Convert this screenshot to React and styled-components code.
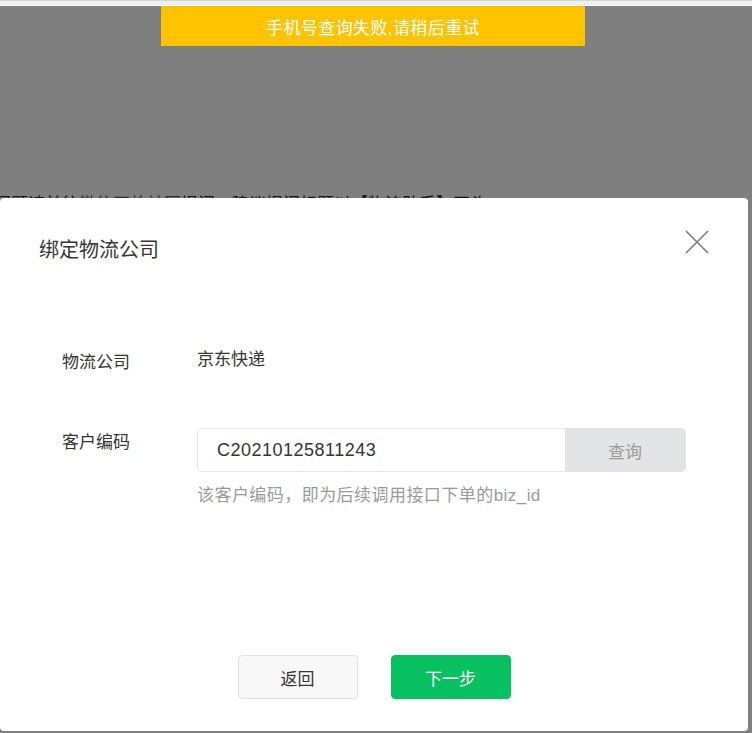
import React from 'react'
import styled, { createGlobalStyle } from 'styled-components'

const GlobalStyle = createGlobalStyle`
  html, body {
    margin: 0;
    padding: 0;
    background: #ffffff;
    font-family: "Liberation Sans", "Noto Sans CJK SC", sans-serif;
    color: #353535;
    overflow: hidden;
  }
`

const Page = styled.div`
  width: 752px;
  height: 733px;
  position: relative;
  overflow: hidden;
`

const TopStrip = styled.div`
  height: 5px;
  border-top: 1px solid #d6d6d6;
  background: #f0f0f0;
  box-sizing: border-box;
`

const PageBody = styled.div`
  padding-top: 188px;
  margin-left: -6px;
  font-size: 17px;
  line-height: 24px;
  color: #2a2a2a;
  white-space: nowrap;
`

const Link = styled.span`
  color: #3f5a8f;
`

const Mask = styled.div`
  position: fixed;
  top: 6px;
  left: 0;
  right: 0;
  bottom: 0;
  background: rgba(0, 0, 0, 0.5);
  display: flex;
  flex-direction: column;
  align-items: flex-start;
`

const Toast = styled.div`
  margin-left: 161px;
  width: 424px;
  height: 40px;
  background: #ffc300;
  color: #ffffff;
  font-size: 17px;
  letter-spacing: 0.4px;
  display: flex;
  align-items: center;
  justify-content: center;
`

const Dialog = styled.div`
  position: relative;
  margin-top: 152px;
  width: 748px;
  height: 533px;
  background: #ffffff;
  border-radius: 4px;
  box-sizing: border-box;
  display: flex;
  flex-direction: column;
  padding: 38px 62px 32px 62px;
`

const Title = styled.h2`
  margin: 0 0 0 -23px;
  font-size: 20px;
  font-weight: normal;
  line-height: 28px;
  color: #353535;
`

const Close = styled.button`
  position: absolute;
  top: 31px;
  right: 38px;
  width: 26px;
  height: 26px;
  padding: 0;
  border: 0;
  background: none;
  cursor: pointer;
`

const Form = styled.div`
  margin-top: 84px;
  display: flex;
  flex-direction: column;
  gap: 53px;
`

const Row = styled.div`
  display: flex;
  align-items: flex-start;
`

const Label = styled.div`
  width: 135px;
  flex-shrink: 0;
  font-size: 17px;
  line-height: 24px;
  padding-top: ${p => p.offset || 0}px;
  color: #353535;
`

const Value = styled.div`
  font-size: 17px;
  line-height: 24px;
  color: #353535;
`

const Field = styled.div`
  flex: 1;
  display: flex;
  flex-direction: column;
`

const InputGroup = styled.div`
  display: flex;
  height: 44px;
  border: 1px solid #e5e5e5;
  border-radius: 4px;
  box-sizing: border-box;
  overflow: hidden;
`

const Input = styled.input`
  flex: 1;
  border: 0;
  outline: none;
  padding: 0 19px;
  font-family: "Liberation Sans", "Noto Sans CJK SC", sans-serif;
  font-size: 18px;
  letter-spacing: 0.5px;
  color: #353535;
  background: #ffffff;
`

const QueryButton = styled.button`
  width: 120px;
  border: 0;
  background: #e3e4e6;
  color: #9a9a9a;
  font-family: inherit;
  font-size: 17px;
`

const Hint = styled.div`
  margin-top: 12px;
  font-size: 17px;
  line-height: 24px;
  letter-spacing: 0.45px;
  color: #9a9a9a;
`

const Footer = styled.div`
  margin-top: auto;
  display: flex;
  justify-content: center;
  gap: 33px;
`

const Button = styled.button`
  width: 120px;
  height: 44px;
  border-radius: 4px;
  font-family: inherit;
  font-size: 17px;
  cursor: pointer;
  border: 1px solid ${p => (p.primary ? '#07c160' : '#e2e2e2')};
  background: ${p => (p.primary ? '#07c160' : '#f8f8f8')};
  color: ${p => (p.primary ? '#ffffff' : '#353535')};
`

const App = () => {
  return (
    <Page>
      <GlobalStyle />
      <TopStrip />
      <PageBody>
        问题请前往<Link>微信开放社区</Link>提问，建议提问标题以【物流助手】开头
      </PageBody>
      <Mask>
        <Toast>手机号查询失败,请稍后重试</Toast>
        <Dialog>
          <Title>绑定物流公司</Title>
          <Close aria-label="关闭">
            <svg width="26" height="26" viewBox="0 0 26 26">
              <path d="M2 2 L24 24 M24 2 L2 24" stroke="#7b7b7b" strokeWidth="1.6" fill="none" />
            </svg>
          </Close>
          <Form>
            <Row>
              <Label offset={3}>物流公司</Label>
              <Value>京东快递</Value>
            </Row>
            <Row>
              <Label offset={3}>客户编码</Label>
              <Field>
                <InputGroup>
                  <Input defaultValue="C20210125811243" />
                  <QueryButton>查询</QueryButton>
                </InputGroup>
                <Hint>该客户编码，即为后续调用接口下单的biz_id</Hint>
              </Field>
            </Row>
          </Form>
          <Footer>
            <Button>返回</Button>
            <Button primary>下一步</Button>
          </Footer>
        </Dialog>
      </Mask>
    </Page>
  )
}

export default App
